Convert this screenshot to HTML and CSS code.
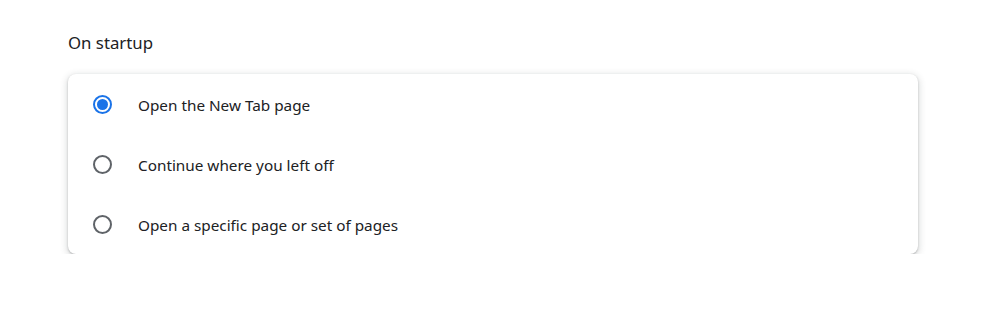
FILE: index.html
```html
<!DOCTYPE html>
<html lang="en">
<head>
<meta charset="utf-8">
<title>On startup</title>
<link rel="stylesheet" href="styles.css">
</head>
<body>
<main class="page">
  <h2 class="section-title">On startup</h2>
  <div class="card" role="radiogroup">
    <label class="row">
      <span class="radio checked"><span class="dot"></span></span>
      <span class="label">Open the New Tab page</span>
    </label>
    <label class="row">
      <span class="radio"></span>
      <span class="label">Continue where you left off</span>
    </label>
    <label class="row">
      <span class="radio"></span>
      <span class="label">Open a specific page or set of pages</span>
    </label>
  </div>
</main>
</body>
</html>
```
FILE: styles.css
```css
html, body {
  margin: 0;
  padding: 0;
  background: #ffffff;
}
body {
  font-family: "Noto Sans", "Open Sans", sans-serif;
  color: #202124;
}
.page {
  width: 850px;
  padding: 31px 0 0 68px;
}
.section-title {
  margin: 0;
  font-size: 16.8px;
  font-weight: 400;
  line-height: 24px;
  height: 24px;
  padding-bottom: 19px;
  color: #202124;
}
.card {
  background: #fff;
  border-radius: 8px;
  box-shadow: 0 1px 2px 0 rgba(60, 64, 67, 0.3), 0 2px 6px 2px rgba(60, 64, 67, 0.15);
  display: flex;
  flex-direction: column;
}
.row {
  height: 60px;
  display: flex;
  align-items: center;
  padding-left: 25px;
}
.radio {
  box-sizing: border-box;
  width: 19px;
  height: 19px;
  border: 2px solid #5f6368;
  border-radius: 50%;
  display: flex;
  align-items: center;
  justify-content: center;
  flex: none;
  margin-top: 1px;
}
.radio.checked {
  border-color: #1a73e8;
}
.dot {
  width: 11px;
  height: 11px;
  border-radius: 50%;
  background: #1a73e8;
}
.label {
  margin-left: 26px;
  margin-top: 2px;
  font-size: 15.3px;
  color: #202124;
}
```
